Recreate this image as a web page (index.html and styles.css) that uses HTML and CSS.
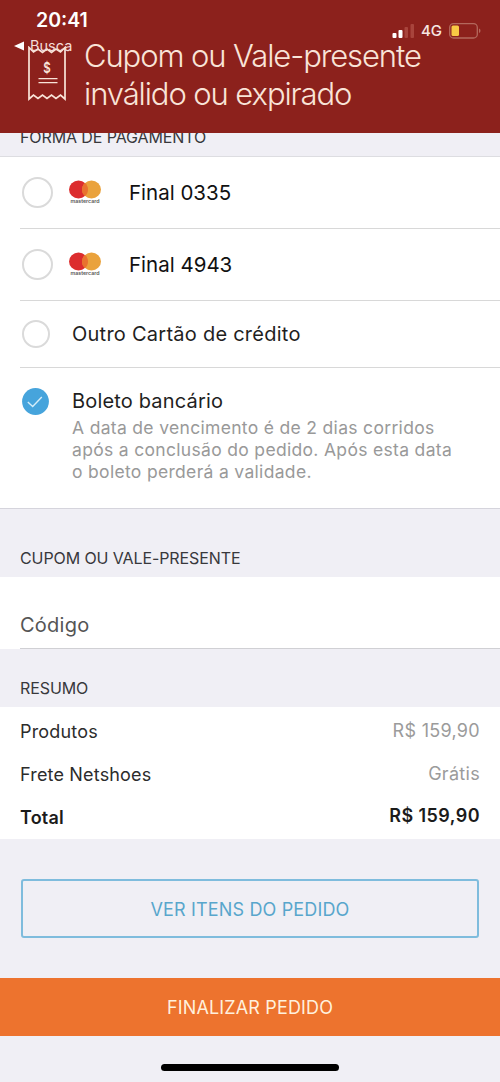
FILE: index.html
```html
<!DOCTYPE html>
<html lang="pt-BR">
<head>
<meta charset="utf-8">
<title>Pagamento</title>
<link rel="stylesheet" href="styles.css">
</head>
<body>
<div class="screen">
  <header class="alert">
    <svg class="receipt" width="40" height="56" viewBox="0 0 40 56" fill="none" stroke="#f9e4d8" stroke-width="1.7">
      <path d="M2 1.500V53L6.500 49L11 52.500L15.500 49L20 52.500L24.500 49L29 52.500L33.500 49L38 53V1.500L33.500 6L29 3L24.500 6.500L20 3L15.500 6.500L11 3L6.500 6Z"/>
      <path d="M11.500 32.600H30.500M11.500 36.600H30.500" stroke-width="1.400"/>
      <text class="receipt-sign" x="20" y="26.500" text-anchor="middle" textLength="7.500" lengthAdjust="spacingAndGlyphs">$</text>
    </svg>
    <p class="alert-text">Cupom ou Vale-presente<br>inválido ou expirado</p>
    <div class="status">
      <span class="clock">20:41</span>
      <span class="back"><svg width="10" height="10" viewBox="0 0 10 10"><path d="M0 5L10 .4V9.600Z" fill="#fff"/></svg><span>Busca</span></span>
      <span class="signals">
        <svg width="22" height="14" viewBox="0 0 22 14"><g fill="#fff"><rect x=".5" y="9" width="4" height="5" rx="1"/><rect x="6.500" y="6" width="4" height="8" rx="1"/></g><g fill="#a8443c"><rect x="12.500" y="3" width="3.500" height="11" rx="1"/><rect x="18.500" width="3.500" height="14" rx="1"/></g></svg>
        <span class="net">4G</span>
        <svg width="32" height="16" viewBox="0 0 32 16"><rect x=".7" y=".7" width="27.600" height="14.300" rx="3.800" fill="none" stroke="#b3685c" stroke-width="1.300"/><rect x="2.500" y="2.500" width="7.500" height="10.500" rx="1.500" fill="#f8c944"/><path d="M30 5.500V10Q31.500 9.500 31.500 7.700T30 5.500Z" fill="#b3685c"/></svg>
      </span>
    </div>
  </header>

  <h2 class="section-title payment-title"><span>FORMA DE PAGAMENTO</span></h2>
  <ul class="options">
    <li class="option card">
      <span class="radio"></span>
      <svg class="brand" width="32" height="25" viewBox="0 0 32 25"><ellipse cx="9.500" cy="9.500" rx="9.500" ry="9" fill="#dc2d2e"/><ellipse cx="22.500" cy="9.500" rx="9.500" ry="9" fill="#eaa23c"/><path d="M16 3Q19 5.500 19 9.500T16 16Q13 13.500 13 9.500T16 3Z" fill="#e9722f"/><text class="brand-name" x="16" y="22.600" text-anchor="middle" textLength="29" lengthAdjust="spacingAndGlyphs">mastercard</text></svg>
      <span class="label card-label">Final 0335</span>
    </li>
    <li class="option card">
      <span class="radio"></span>
      <svg class="brand" width="32" height="25" viewBox="0 0 32 25"><ellipse cx="9.500" cy="9.500" rx="9.500" ry="9" fill="#dc2d2e"/><ellipse cx="22.500" cy="9.500" rx="9.500" ry="9" fill="#eaa23c"/><path d="M16 3Q19 5.500 19 9.500T16 16Q13 13.500 13 9.500T16 3Z" fill="#e9722f"/><text class="brand-name" x="16" y="22.600" text-anchor="middle" textLength="29" lengthAdjust="spacingAndGlyphs">mastercard</text></svg>
      <span class="label card-label">Final 4943</span>
    </li>
    <li class="option other">
      <span class="radio small"></span>
      <span class="label">Outro Cartão de crédito</span>
    </li>
    <li class="option boleto">
      <svg class="checked" width="27" height="27" viewBox="0 0 27 27"><circle cx="13.500" cy="13.500" r="13.400" fill="#46a4dc"/><path d="M5.800 14L10.700 18.500L19.800 9" fill="none" stroke="#d5edf9" stroke-width="1.400"/></svg>
      <div>
        <span class="label">Boleto bancário</span>
        <p class="hint">A data de vencimento é de 2 dias corridos<br>após a conclusão do pedido. Após esta data<br>o boleto perderá a validade.</p>
      </div>
    </li>
  </ul>

  <h2 class="section-title coupon-title">CUPOM OU VALE-PRESENTE</h2>
  <div class="coupon"><div class="field">Código</div></div>

  <h2 class="section-title summary-title">RESUMO</h2>
  <dl class="summary">
    <div class="line"><dt>Produtos</dt><dd>R$ 159,90</dd></div>
    <div class="line"><dt>Frete Netshoes</dt><dd>Grátis</dd></div>
    <div class="line total"><dt>Total</dt><dd>R$ 159,90</dd></div>
  </dl>

  <button class="items" type="button">VER ITENS DO PEDIDO</button>
  <button class="finish" type="button">FINALIZAR PEDIDO</button>
  <div class="home"></div>
</div>
</body>
</html>
```
FILE: styles.css
```css
* { box-sizing: border-box; margin: 0; padding: 0; }
body { background: #f0eff5; font-family: Inter, "Liberation Sans", sans-serif; color: #222; }
.screen { width: 500px; height: 1082px; overflow: hidden; white-space: nowrap; }
svg { display: block; flex: none; }

.alert { position: relative; display: flex; height: 133px; padding: 37px 0 0 27px; background: #8c211c; color: #f9e4d8; }
.receipt { margin-top: 9px; }
.receipt-sign { font-size: 14px; font-weight: 600; fill: #f9e4d8; stroke: none; }
.alert-text { margin-left: 17px; font-size: 31px; font-weight: 300; line-height: 38px; letter-spacing: -1.1px; }
.status { position: absolute; inset: 0; color: #fff; }
.clock { position: absolute; left: 36px; top: 8px; font-size: 19.500px; line-height: 24px; font-weight: 600; }
.back { position: absolute; left: 14px; top: 36px; display: flex; align-items: center; gap: 6px; font-size: 14.500px; line-height: 20px; color: #f4ddd8; }
.signals { position: absolute; left: 392px; top: 23px; display: flex; align-items: center; }
.net { width: 35px; padding-left: 7px; font-size: 15px; font-weight: 500; line-height: 16px; color: #f7e6e2; }

.section-title { padding-left: 20px; font-size: 16px; font-weight: 400; line-height: 20px; letter-spacing: -.1px; color: #38383c; }
.payment-title { height: 24px; overflow: hidden; border-bottom: 1px solid #dddde1; }
.payment-title span { display: block; margin-top: -6px; }
.coupon-title { height: 68px; padding-top: 39px; }
.summary-title { height: 58px; padding-top: 29px; }

.options { height: 352px; list-style: none; background: #fff; border-bottom: 1px solid #d5d4dc; }
.option { display: flex; align-items: center; margin-left: 20px; padding-left: 2px; border-bottom: 1px solid #d8d8d8; }
.card { height: 72px; }
.other { height: 67px; }
.radio { flex: none; width: 31px; height: 31px; border: 2px solid #dadada; border-radius: 50%; }
.radio.small { width: 28px; height: 28px; }
.brand { margin-left: 16px; }
.brand-name { font-size: 5px; font-weight: 600; fill: #555; }
.label { font-size: 20px; line-height: 26px; letter-spacing: .25px; color: #1f1f1f; }
.card-label { margin-left: 28px; font-size: 20.500px; letter-spacing: 0; color: #111; }
.other .label { margin-left: 22px; }
.boleto { height: 139px; align-items: flex-start; padding-top: 20px; border: 0; gap: 23px; }
.boleto .label { display: block; letter-spacing: .17px; }
.hint { margin-top: 3px; font-size: 17.500px; line-height: 22px; letter-spacing: .32px; color: #999; }

.coupon { height: 72px; padding-left: 20px; background: #fff; }
.field { height: 72px; padding-top: 35px; border-bottom: 1px solid #d0d0d4; font-size: 20px; line-height: 26px; letter-spacing: .25px; color: #555; }

.summary { height: 132px; padding: 0 20px; background: #fff; }
.line { display: flex; justify-content: space-between; height: 42.500px; font-size: 18px; line-height: 22px; }
.line dt { padding-top: 14px; letter-spacing: .17px; color: #2c2c2c; }
.line dd { padding-top: 13px; letter-spacing: .3px; color: #9b9b9b; }
.total { font-weight: 600; }
.total dt { padding-top: 15px; }
.total dd { letter-spacing: .42px; }
.total dt, .total dd { color: #1b1b1b; }

button { display: block; padding-top: 2px; font-family: inherit; font-size: 18px; line-height: 22px; letter-spacing: .15px; border-radius: 0; }
.items { width: 458px; height: 59px; margin: 40px 0 40px 21px; border: 2px solid #7fbcdd; border-radius: 3px; background: transparent; color: #58a6cc; }
.finish { width: 500px; height: 58px; border: 0; background: #ed732e; color: #fff0dd; }
.home { width: 178px; height: 7px; margin: 28px 0 0 161px; border-radius: 4px; background: #000; }
```
